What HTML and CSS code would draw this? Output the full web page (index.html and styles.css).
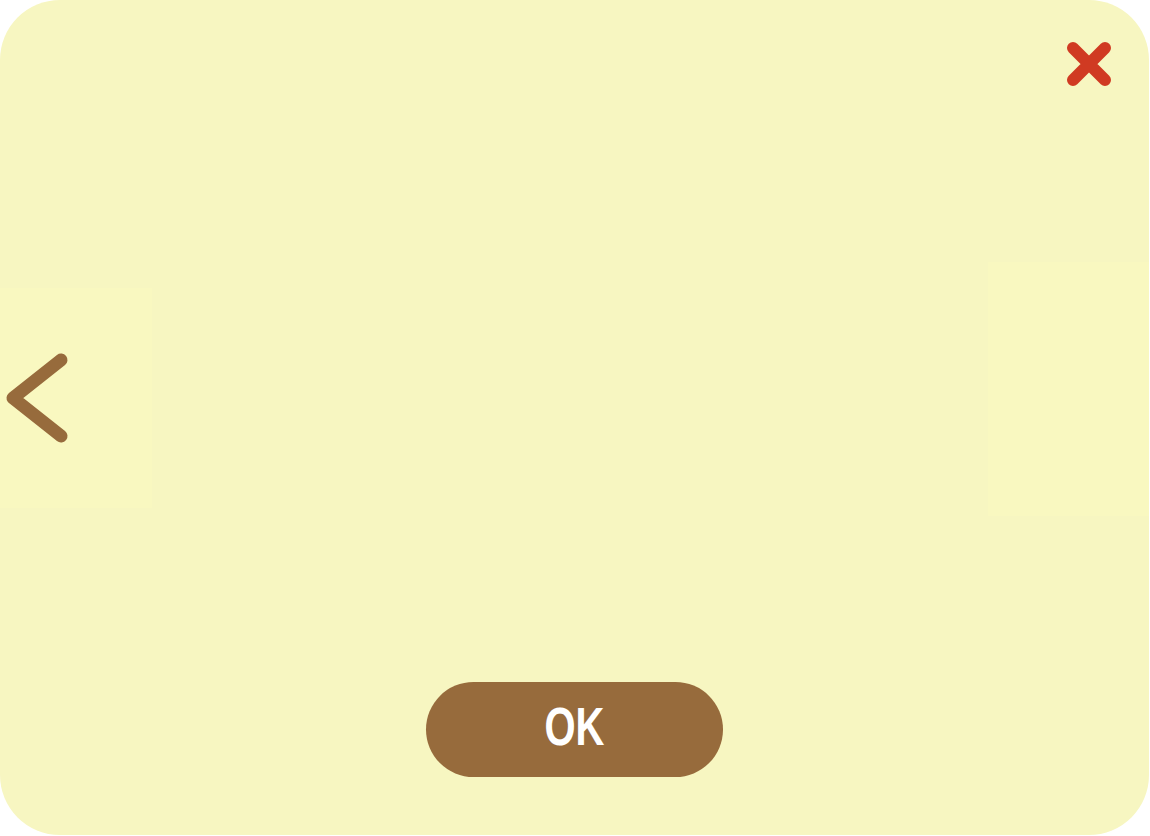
FILE: index.html
```html
<!DOCTYPE html>
<html lang="en">
<head>
<meta charset="utf-8">
<title>Dialog</title>
<link rel="stylesheet" href="styles.css">
</head>
<body>
<div class="dialog">
  <div class="header">
    <button class="close" aria-label="Close">
      <svg width="46" height="46" viewBox="0 0 46 46">
        <path d="M7 7 L39 39 M39 7 L7 39" stroke="#d03a22" stroke-width="12" stroke-linecap="round" fill="none"/>
      </svg>
    </button>
  </div>
  <div class="carousel">
    <button class="nav nav-prev" aria-label="Previous">
      <svg width="152" height="220" viewBox="0 0 152 220">
        <path d="M61 72 L13 110 L61 148" stroke="#976b3c" stroke-width="13" stroke-linecap="round" stroke-linejoin="round" fill="none"/>
      </svg>
    </button>
    <button class="nav nav-next" aria-label="Next"></button>
  </div>
  <div class="footer">
    <button class="ok"><span class="ok-label">OK</span></button>
  </div>
</div>
</body>
</html>
```
FILE: styles.css
```css
html, body {
  margin: 0;
  padding: 0;
  background: #ffffff;
}
.dialog {
  width: 1149px;
  height: 835px;
  background: #f7f6c1;
  border-radius: 60px;
  display: flex;
  flex-direction: column;
  box-sizing: border-box;
  position: relative;
  overflow: hidden;
}
button {
  border: 0;
  padding: 0;
  margin: 0;
  background: none;
  font: inherit;
  cursor: pointer;
}
.header {
  display: flex;
  justify-content: flex-end;
  padding: 41px 37px 0 0;
}
.close {
  width: 46px;
  height: 46px;
  display: block;
}
.close svg, .nav svg { display: block; }
.carousel {
  display: flex;
  justify-content: space-between;
  align-items: flex-start;
  margin-top: 175px;
}
.nav {
  display: block;
  background: #f9f8c0;
}
.nav-prev {
  width: 152px;
  height: 220px;
  margin-top: 26px;
}
.nav-next {
  width: 161px;
  height: 254px;
}
.footer {
  margin-top: auto;
  display: flex;
  justify-content: center;
  padding: 0 0 58px 0;
}
.ok {
  width: 297px;
  height: 95px;
  border-radius: 48px;
  background: #976b3c;
  color: #ffffff;
  display: flex;
  align-items: center;
  justify-content: center;
}
.ok-label {
  display: inline-block;
  font-family: "Liberation Sans", Arial, sans-serif;
  font-weight: bold;
  font-size: 54px;
  line-height: 1;
  transform: scaleX(0.74);
  margin-top: -8px;
}
```
